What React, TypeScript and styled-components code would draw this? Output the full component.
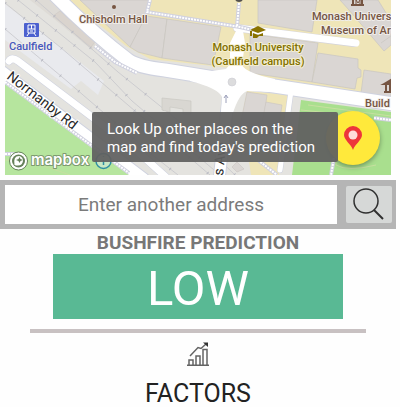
import React from "react";
import styled, { createGlobalStyle } from "styled-components";

const GlobalStyle = createGlobalStyle`
  * { box-sizing: border-box; }
  body { margin: 0; background: #fefefe; font-family: Roboto, sans-serif; }
`;

const Page = styled.main`
  padding-right: 4px;
`;

const MapPanel = styled.section`
  position: relative;
  height: 175px;
  margin: 0 5px;
  overflow: hidden;
  background: #e4e3df;
`;

const MapDrawing = styled.svg`
  display: block;
  width: 100%;
  height: 100%;
`;

const Hint = styled.div`
  position: absolute;
  right: 53px;
  bottom: 13px;
  width: 246px;
  padding: 8px 15px 6px;
  border-radius: 2px;
  background: rgba(97, 97, 97, 0.94);
  color: #fff;
  font-size: 15px;
  line-height: 18px;
  white-space: nowrap;
`;

const PinButton = styled.button`
  position: absolute;
  right: 11px;
  bottom: 10px;
  width: 54px;
  height: 54px;
  padding: 0;
  border: 0;
  border-radius: 50%;
  background: #ffe93b;
  box-shadow: 0 2px 5px rgba(0, 0, 0, 0.35);
  display: grid;
  place-items: center;
`;

const SearchBar = styled.form`
  display: flex;
  align-items: center;
  gap: 9px;
  margin-top: 5px;
  padding: 5px 4px 5px 5px;
  height: 49px;
  background: #b5b5b5;
`;

const AddressInput = styled.input`
  flex: 1;
  min-width: 0;
  height: 39px;
  padding: 0;
  border: 0;
  border-radius: 0;
  background: #fff;
  color: #444;
  font: 19px Roboto, sans-serif;
  text-align: center;
  &::placeholder { color: #7b7b7b; opacity: 1; }
`;

const SearchButton = styled.button`
  width: 46px;
  height: 37px;
  padding: 0;
  border: 0;
  border-radius: 2px;
  background: #d6d8d7;
  display: grid;
  place-items: center;
`;

const Prediction = styled.section`
  display: flex;
  flex-direction: column;
  align-items: center;
`;

const PredictionTitle = styled.h1`
  margin: 0;
  padding-top: 2px;
  color: #777;
  font-size: 19px;
  font-weight: 700;
  line-height: 23px;
`;

const Rating = styled.div`
  width: 73%;
  background: #59b994;
  color: #fff;
  font-size: 49px;
  line-height: 65px;
  padding-top: 2px;
  height: 65px;
  text-align: center;
`;

const Divider = styled.hr`
  width: 85%;
  height: 4px;
  margin: 10px 0 9px;
  border: 0;
  background: #c8c1c2;
`;

const Factors = styled.section`
  display: flex;
  flex-direction: column;
  align-items: center;
`;

const FactorsTitle = styled.h2`
  margin: 15px 0 0;
  color: #222;
  font-size: 25px;
  font-weight: 400;
  line-height: 26px;
`;

const label = {
  fontFamily: "Roboto, sans-serif",
  fontSize: 11,
  fontWeight: 500,
  strokeWidth: 2,
  paintOrder: "stroke",
  strokeLinejoin: "round",
} as const;

const railLines = [
  "M5 3 L60 47 L210 175",
  "M18 0 L95 62 L132 101 L220 175",
  "M5 29 L68 82 L155 157 L178 175",
  "M36 0 L118 72 L180 122 L235 175",
];

const footpaths =
  "M5 82 L129 173 M95 46 L115 62 L137 73 M150 0 L147 12 L240 27 L253 30 M239 3 L237 27 M374 118 L391 120 M334 158 L331 175 M258 160 L277 175 M5 154 H16";

function StreetMap() {
  return (
    <MapDrawing viewBox="5 0 386 175" preserveAspectRatio="xMidYMid slice" role="img" aria-label="Map of Caulfield">
      <rect x="5" width="386" height="175" fill="#e4e3df" />
      <path d="M5 4 L104 81 L98 95 L81 81 L71 89 L5 40Z" fill="#e9eaee" />
      <path d="M30 0 L61 0 L96 45 L92 50 L53 18Z" fill="#dedbd6" />
      <path d="M53 16 l7 -5 L95 42 l-4 5Z" fill="#dad4ce" stroke="#cfcac5" strokeWidth=".6" />
      {railLines.map((d) => (
        <g key={d} fill="none">
          <path d={d} stroke="#c7c7cb" strokeWidth=".8" />
          <path d={d} stroke="#b9bac3" strokeWidth="3" strokeDasharray="1 23" />
        </g>
      ))}
      <path d="M162 98 L191 101 V114 H183 V109 L170 107 V112 L162 110Z" fill="#d9d7d2" stroke="#cac8c3" strokeWidth=".7" />

      <path d="M68 0 H391 V106 L243 87 L230 68 L150 59 L126 46Z" fill="#efe5b8" />
      <g fill="#dad6d3" stroke="#c9c5c1" strokeWidth=".7">
        <path d="M80 0 H149 L148 13 L130 47Z" />
        <path d="M130 47 L146 16 L167 19 L162 58 L138 52Z" />
        <path d="M167 19 L221 27 L213 65 L162 58Z" />
        <path d="M258 0 H317 L312 32 L258 23Z" />
        <path d="M250 34 L318 43 L312 82 L250 73Z" />
        <path d="M318 53 L358 59 V68 L361 70 V77 L357 78 L355 89 L312 82Z" />
        <path d="M364 70 L391 74 V99 L361 93Z" />
        <path d="M340 0 H378 L391 21 V45 L384 51 L349 10Z" />
        <path d="M381 43 L391 36" />
      </g>
      <path d="M247 91 L242 116 L251 175 L279 175 L289 95Z" fill="#efe5b8" />
      <g fill="#dad6d3" stroke="#c9c5c1" strokeWidth=".6">
        <path d="M247 92 L267 95 L262 130 L240 126Z" />
        <path d="M266 102 L282 105 L275 152 L257 148Z" />
        <path d="M237 162 L244 169 L237 172 L232 167Z" />
      </g>

      <g fill="none" strokeLinecap="round" strokeLinejoin="round">
        <path d="M50 -10 C79 20 103 41 128 60 Q138 67 165 70 L233 81 L274 86 L400 105" stroke="#cfd2df" strokeWidth="15" />
        <path d="M237 28 L354 43" stroke="#d3d3dc" strokeWidth="8" />
        <path d="M9 61 Q12 57 18 61 L137 151 L167 178" stroke="#cfd2df" strokeWidth="8" />
        <path d="M-2 71 L142 180" stroke="#cfd2df" strokeWidth="17" />
        <path d="M230 82 L219 180" stroke="#cfd2df" strokeWidth="13" />
        <path d="M291 91 L280 170" stroke="#cfd2df" strokeWidth="6" />
        <path d="M50 -10 C79 20 103 41 128 60 Q138 67 165 70 L233 81 L274 86 L400 105" stroke="#fff" strokeWidth="13" />
        <path d="M237 28 L356 43" stroke="#fff" strokeWidth="7" />
        <path d="M9 61 Q12 57 18 61 L137 151 L167 178" stroke="#fff" strokeWidth="7" />
        <path d="M-2 71 L142 180" stroke="#fff" strokeWidth="15" />
        <path d="M230 82 L219 180" stroke="#fff" strokeWidth="11" />
        <path d="M291 91 L280 170" stroke="#fff" strokeWidth="5" />
      </g>
      <path d="M190 74 L226 69 L230 64 V43 L236 31 H243 L245 43 L242 65 Q246 73 275 79 L272 92 L247 91 Q239 94 233 113 H221 L222 97 Q218 88 190 81Z" fill="#fff" />
      <circle cx="232" cy="82" r="4" fill="#dcdcdd" stroke="#cccdd4" strokeWidth=".6" />
      <path d="M226 103 V96 M224 98 L226 95 L228 98" stroke="#9b9fb9" fill="none" />

      <path d="M5 84 L129 175 H5Z" fill="#b6e59e" />
      <path d="M301 100 L391 112 V175 H292Z" fill="#a9df8e" />
      <path d="M308 105 L391 116 M301 110 L330 113 V130 M336 125 V165 Q348 172 376 165 M5 160 C35 162 50 168 70 175" stroke="#c7dfa0" strokeWidth="1" fill="none" />
      <path d={footpaths} fill="none" stroke="#d0d1df" strokeWidth="4" />
      <path d={footpaths} fill="none" stroke="#fff" strokeWidth="2" strokeDasharray="2 1" />

      <rect x="24" y="23" width="15" height="14" rx="1" fill="#4b60cf" />
      <path d="M28 25 H35 V33 H28Z M28 29 H35 M31.500 25 V29 M29 33 L27 36 M34 33 L36 36 M30 31 H33" fill="none" stroke="#fff" />
      <circle cx="114" cy="7" r="2" fill="#765542" />
      <circle cx="239" cy="-2" r="4" fill="#53504c" />
      <path d="M250 30 L258 26 L266 30 L258 33Z M253 33 L258 35 L263 33 V36 H259 L257 38 H253Z" fill="#8a7200" />
      <path d="M251 31 V36" stroke="#8a7200" strokeWidth="2" />
      <path d="M352 -2 H363 M353 -1 V5 M362 -1 V5 M351 5 H364" fill="none" stroke="#765542" strokeWidth="2" />
      <path d="M356 5 V0 L358 3 L360 0 V5" fill="none" stroke="#765542" />
      <path d="M384 84 L391 80 V84Z M386 85 V92 M390 85 V92 M384 92 H391" fill="#765542" stroke="#765542" strokeWidth="2" />

      <g {...label} stroke="#f0edea">
        <text x="9" y="50" fill="#4858bd">Caulfield</text>
        <text x="79" y="23" fill="#765542">Chisholm Hall</text>
        <text x="312" y="20" fill="#765542">Monash Univers</text>
        <text x="321" y="34" fill="#765542">Museum of Art</text>
        <text x="365" y="107" fill="#765542">Build</text>
        <g fill="#827100" stroke="#f5efd0" textAnchor="middle">
          <text x="258" y="51">Monash University</text>
          <text x="258" y="65">(Caulfield campus)</text>
        </g>
      </g>
      <g {...label} fontSize="14" fontWeight="400" fill="#292929" stroke="#fff">
        <text transform="translate(6 78) rotate(38)">Normanby Rd</text>
        <text transform="translate(223 176) rotate(-84)">s Ave</text>
      </g>

      <circle cx="103.500" cy="161" r="7.500" fill="#c8e8c5" stroke="#2f8fa2" strokeWidth="1.500" />
      <path d="M103.500 160 V165 M103.500 156 V157" stroke="#2f8fa2" strokeWidth="1.500" />
      <circle cx="18.500" cy="161" r="9" fill="#fff" stroke="#65805a" strokeWidth="1" />
      <circle cx="18.500" cy="161" r="6.500" fill="#65805a" />
      <path d="M14.500 165 Q13 156 19 156 A4.500 4.500 0 0 1 23 161 Q22 167 14.500 165Z" fill="#fff" />
      <path d="M19.500 157 L20.500 159 L23 160 L20.500 161 L19.500 163 L18.500 161 L16 160 L18.500 159Z" fill="#65805a" />
      <text x="31" y="165" fontFamily="Inter, sans-serif" fontWeight="600" fontSize="15" fill="#fff" stroke="#7d9a70" strokeWidth="2" paintOrder="stroke" strokeLinejoin="round">mapbox</text>
    </MapDrawing>
  );
}

export default function App() {
  return (
    <>
      <GlobalStyle />
      <Page>
        <MapPanel>
          <StreetMap />
          <PinButton type="button" aria-label="Look up a place">
            <svg width="18" height="24" viewBox="0 0 18 24" aria-hidden="true">
              <path d="M9 24 C7 18 0 14 0 9 A9 9 0 0 1 18 9 C18 14 11 18 9 24Z" fill="#ed353b" />
              <circle cx="9" cy="9" r="4.500" fill="#ffdcda" />
            </svg>
          </PinButton>
          <Hint role="tooltip">Look Up other places on the<br />map and find today's prediction</Hint>
        </MapPanel>
        <SearchBar onSubmit={(e) => e.preventDefault()}>
          <AddressInput type="text" aria-label="Address" placeholder="Enter another address" />
          <SearchButton type="submit" aria-label="Search">
            <svg width="32" height="33" viewBox="0 0 32 33" fill="none" stroke="#303030" aria-hidden="true">
              <circle cx="13" cy="13" r="12" strokeWidth="1.500" />
              <path d="M21 22 L30 31" strokeWidth="2" />
            </svg>
          </SearchButton>
        </SearchBar>
        <Prediction>
          <PredictionTitle>BUSHFIRE PREDICTION</PredictionTitle>
          <Rating>LOW</Rating>
          <Divider />
        </Prediction>
        <Factors>
          <svg width="22" height="24" viewBox="0 0 22 24" fill="none" stroke="#646464" strokeWidth="1.500" aria-hidden="true">
            <path d="M0 23.300 H22 M2 23 V18 H6 V23 M9 23 V14 H13 V23 M16 23 V7.500 H20 V23" />
            <path d="M3 14 L11 5.500 L14 6.500 L19 2" />
            <path d="M16 0.500 H21 V5Z" fill="#333" stroke="none" />
          </svg>
          <FactorsTitle>FACTORS</FactorsTitle>
        </Factors>
      </Page>
    </>
  );
}
